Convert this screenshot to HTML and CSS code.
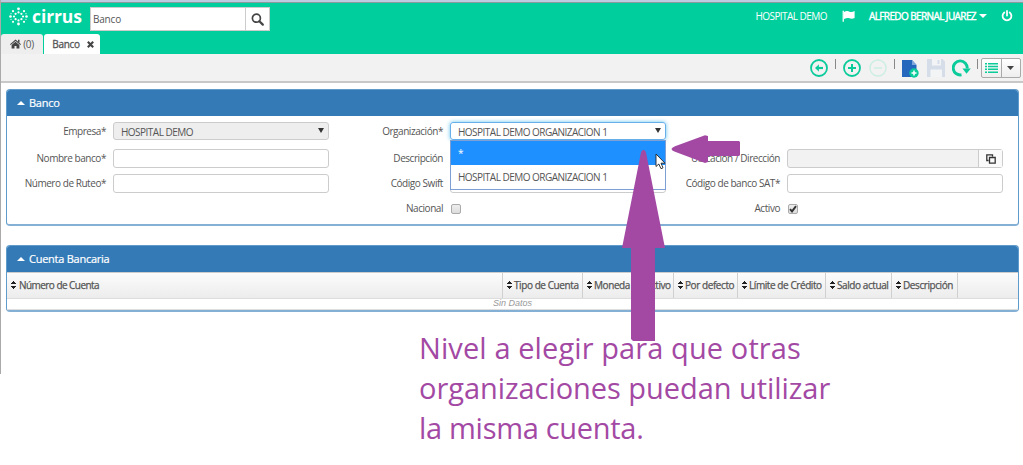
FILE: index.html
```html
<!DOCTYPE html>
<html lang="es">
<head>
  <meta charset="UTF-8" />
  <title>Cirrus - Banco</title>
  <link rel="stylesheet" href="styles.css">
</head>
<body>

<div class="app">
  <header>
    <div class="topbar">
      <div class="logo">
        <svg width="19" height="19" viewBox="0 0 19 19" fill="#fff">
          <circle cx="9.5" cy="1.8" r="1.4"/><circle cx="9.5" cy="5.4" r="1.1"/>
          <circle cx="9.5" cy="17" r="1.4"/><circle cx="9.5" cy="13.4" r="1.1"/>
          <circle cx="1.5" cy="9.5" r="1.3"/><circle cx="5" cy="9.5" r="1.1"/>
          <circle cx="17.5" cy="9.5" r="1.3"/><circle cx="14" cy="9.5" r="1.1"/>
          <circle cx="4" cy="4.2" r="1.1"/><circle cx="6.6" cy="6.8" r="1.1"/>
          <circle cx="15" cy="4.2" r="1.1"/><circle cx="12.4" cy="6.8" r="1.1"/>
          <circle cx="4" cy="14.8" r="1.1"/><circle cx="6.6" cy="12.2" r="1.1"/>
          <circle cx="15" cy="14.8" r="1.1"/><circle cx="12.4" cy="12.2" r="1.1"/>
          <circle cx="2" cy="6.7" r=".6"/><circle cx="2" cy="12.3" r=".6"/>
          <circle cx="17" cy="6.7" r=".6"/><circle cx="17" cy="12.3" r=".6"/>
        </svg>
        <span>cirrus</span>
      </div>
      <div class="search">
        <div class="search-text">Banco</div>
        <div class="search-btn">
          <svg width="13" height="13" viewBox="0 0 13 13" fill="none" stroke="#444">
            <circle cx="5.4" cy="5.2" r="4" stroke-width="1.7"/>
            <path d="M8.4 8.2L11.8 11.6" stroke-width="2.2" stroke-linecap="round"/>
          </svg>
        </div>
      </div>
      <div class="user">
        <span class="company">HOSPITAL DEMO</span>
        <svg class="flag" width="13" height="12" viewBox="0 0 13 12" fill="#fff">
          <path d="M.6 .8h1.3v11H.6z"/>
          <path d="M2 2C4.5.6 6 1 7.5 1.7S10.8 2 12.600 1.100V8C10.800 9 9 9 7.500 8.300S4.500 7.800 2 9z"/>
        </svg>
        <span class="name">ALFREDO BERNAL JUAREZ</span>
        <svg class="caret" width="8" height="4" viewBox="0 0 8 4"><path d="M0 0h8L4 4z" fill="#fff"/></svg>
        <svg width="12" height="12" viewBox="0 0 12 12" fill="none" stroke="#fff" stroke-width="1.8" stroke-linecap="round">
          <path d="M3.300 2.500A4.400 4.400 0 1 0 8.700 2.500M6 1V5.500"/>
        </svg>
      </div>
    </div>
    <div class="tabs">
      <div class="tab home">
        <svg width="11" height="10" viewBox="0 0 11 10" fill="#444">
          <path d="M5.500 .5L11 5.200L10.300 6L5.500 2L.7 6L0 5.200zM8 .8h1.500v3L8 2.500z"/>
          <path d="M5.500 2.800L9.400 6V9.600H6.500V6.900H4.500V9.600H1.600V6z"/>
        </svg>
        <span>(0)</span>
      </div>
      <div class="tab active">
        <span>Banco</span>
        <svg width="7" height="7" viewBox="0 0 7 7" stroke="#444" stroke-width="2.100"><path d="M.8 .8L6.200 6.200M6.200 .8L.8 6.200"/></svg>
      </div>
    </div>
  </header>

  <div class="toolbar">
    <svg class="t-back" width="18" height="18" viewBox="0 0 18 18" fill="none" stroke="#0bcb9b" stroke-width="1.800">
      <circle cx="9" cy="9" r="8"/>
      <path d="M5.800 9H13" stroke-width="2.200"/><path d="M8.900 5.300L5.200 9L8.900 12.700z" fill="#0bcb9b" stroke="none"/>
    </svg>
    <i class="sep"></i>
    <svg class="t-add" width="18" height="18" viewBox="0 0 18 18" fill="none" stroke="#0bcb9b" stroke-width="1.800">
      <circle cx="9" cy="9" r="8"/><path d="M9 5V13M5 9H13" stroke-width="2"/>
    </svg>
    <svg class="t-minus" width="18" height="18" viewBox="0 0 18 18" fill="none" stroke="#cdeee3" stroke-width="1.500">
      <circle cx="9" cy="9" r="8"/><path d="M5 9H13"/>
    </svg>
    <i class="sep"></i>
    <svg class="t-new" width="17" height="19" viewBox="0 0 17 19">
      <path d="M0 1H10L14.500 6V18H0z" fill="#2467bd"/><path d="M10 1V6H14.500z" fill="#7fa7dc"/>
      <circle cx="12" cy="14" r="4.700" fill="#0bcb9b"/><path d="M12 11.500V16.500M9.500 14H14.500" stroke="#fff" stroke-width="1.500"/>
    </svg>
    <svg class="t-save" width="18" height="18" viewBox="0 0 18 18">
      <path d="M0 0H15.500L18 2.500V18H0z" fill="#d5dde8"/><path d="M5 0H14V6.500H5zM3.500 10.500H15V18H3.500z" fill="#f3f4f6"/><path d="M10.500 1H12.500V5H10.500z" fill="#d5dde8"/>
    </svg>
    <svg class="t-refresh" width="19" height="18" viewBox="0 0 19 18">
      <path d="M9.500 15.800A7 7 0 1 1 15.200 9.500" fill="none" stroke="#0bcb9b" stroke-width="2.900"/><path d="M10.500 9.500H18.800L14.500 14.700z" fill="#0bcb9b"/>
    </svg>
    <i class="sep"></i>
    <div class="view-btn">
      <span class="view-list">
        <svg width="13" height="10" viewBox="0 0 13 10" fill="#0bcb9b"><path d="M0 0h2v1.500H0zM3 0h10v1.500H3zM0 2.800h2v1.500H0zM3 2.800h10v1.500H3zM0 5.600h2v1.500H0zM3 5.600h10v1.500H3zM0 8.400h2V9.900H0zM3 8.400h10V9.900H3z"/></svg>
      </span>
      <span class="view-caret"><svg width="7" height="4" viewBox="0 0 7 4"><path d="M0 0h7L3.500 4z" fill="#444"/></svg></span>
    </div>
  </div>

  <main>
    <section class="panel">
      <h2><i class="up"></i>Banco</h2>
      <div class="form">
        <label>Empresa*</label>
        <div class="field select disabled">HOSPITAL DEMO</div>
        <label>Organización*</label>
        <div class="field select focus">HOSPITAL DEMO ORGANIZACION 1
          <ul class="options">
            <li class="selected">*</li>
            <li>HOSPITAL DEMO ORGANIZACION 1</li>
          </ul>
        </div>
        <span></span><span></span>

        <label>Nombre banco*</label>
        <div class="field"></div>
        <label>Descripción</label>
        <div class="field"></div>
        <label>Ubicación / Dirección</label>
        <div class="field lookup">
          <span class="lookup-btn">
            <svg width="10" height="10" viewBox="0 0 10 10" fill="none" stroke="#333" stroke-width="1.300"><path d="M3.500 3.500H9.200V9.200H3.500zM2.500 6.500H.8V.8H6.500V2.500"/></svg>
          </span>
        </div>

        <label>Número de Ruteo*</label>
        <div class="field"></div>
        <label>Código Swift</label>
        <div class="field"></div>
        <label>Código de banco SAT*</label>
        <div class="field"></div>

        <span></span><span></span>
        <label>Nacional</label>
        <div class="check"></div>
        <label>Activo</label>
        <div class="check">
          <svg width="8" height="8" viewBox="0 0 8 8"><path d="M1 4.200L3 6.400L7 1.200" fill="none" stroke="#333" stroke-width="1.900"/></svg>
        </div>
      </div>
    </section>

    <section class="panel">
      <h2><i class="up"></i>Cuenta Bancaria</h2>
      <div class="grid-head">
        <div><i class="sort"></i>Número de Cuenta</div>
        <div><i class="sort"></i>Tipo de Cuenta</div>
        <div><i class="sort"></i>Moneda</div>
        <div><i class="sort"></i>Activo</div>
        <div><i class="sort"></i>Por defecto</div>
        <div><i class="sort"></i>Límite de Crédito</div>
        <div><i class="sort"></i>Saldo actual</div>
        <div><i class="sort"></i>Descripción</div>
        <div></div>
      </div>
      <div class="empty">Sin Datos</div>
    </section>
  </main>
</div>

<p class="note">
  <span class="l1">Nivel a elegir para que otras</span>
  <span class="l2">organizaciones puedan utilizar</span>
  <span class="l3">la misma cuenta.</span>
</p>

<!-- cursor and arrows over the page -->
<svg class="overlay" width="1023" height="465" viewBox="0 0 1023 465">
  <path d="M656 154V166.500L658.800 164L661 168.700L663 167.800L661 163.200H665z" fill="#fff" stroke="#222" stroke-width=".9"/>
  <g fill="#a349a4">
    <path d="M643.500 150Q645.800 150 646.500 155L665 248H655V341H633L631 339V248H622L640.500 155Q641.200 150 643.500 150z"/>
    <path d="M671.500 149Q671.500 147.600 675 146.200L705 135.200L708 136V141H739L740 142V155L739 156H708V162L705 163L675 151.800Q671.500 150.500 671.500 149z"/>
  </g>
</svg>

</body>
</html>
```
FILE: styles.css
```css
* {
  box-sizing: border-box;
}

body {
  margin: 0;
  font-family: "Open Sans", sans-serif;
  font-size: 10px;
  letter-spacing: -0.45px;
  color: #555;
  background-color: #fff;
}

svg {
  display: block;
  flex: none;
}

.app {
  height: 374px;
  border-left: 1px solid #aaa;
}

header {
  height: 54px;
  border-top: 2px solid #bccbe0;
  background-color: #00cf9d;
  box-shadow: inset 0 1px #8a9b9e;
  display: flex;
  flex-direction: column;
  justify-content: space-between;
}

.topbar {
  display: flex;
  align-items: flex-start;
  padding: 5px 10px 0 8px;
}

.logo {
  display: flex;
  width: 81px;
  gap: 4px;
  color: #fff;
}

.logo span {
  font-size: 17.5px;
  font-weight: 700;
  line-height: 18px;
  letter-spacing: -0.1px;
}

.search {
  display: flex;
  width: 180px;
  height: 24px;
  background-color: #fff;
  border: 1px solid #ccc;
}

.search-text {
  flex: 1;
  padding-left: 2px;
  line-height: 23px;
  letter-spacing: -0.2px;
}

.search-btn {
  width: 24px;
  border-left: 1px solid #ccc;
  display: flex;
  align-items: center;
  justify-content: center;
}

.user {
  display: flex;
  align-items: center;
  margin: 2px 0 0 auto;
  color: #fff;
  height: 14px;
}

.company {
  letter-spacing: -0.55px;
}

.flag {
  margin: 0 14px 0 15px;
}

.name {
  -webkit-text-stroke: 0.4px;
  letter-spacing: -0.6px;
}

.caret {
  margin: 0 14px 0 3px;
}

.tabs {
  display: flex;
  gap: 1px;
}

.tab {
  height: 20px;
  display: flex;
  align-items: center;
  justify-content: center;
  border-radius: 3px 3px 0 0;
}

.home {
  width: 42px;
  gap: 2px;
  background-color: #eee;
}

.active {
  width: 56px;
  gap: 7px;
  padding-left: 2px;
  background-color: #fff;
  -webkit-text-stroke: 0.3px;
  letter-spacing: -0.3px;
}

.toolbar {
  height: 29px;
  background-color: #f2f2f2;
  border-bottom: 2px solid #c8c8c8;
  display: flex;
  align-items: center;
  justify-content: flex-end;
  padding: 1px 2px 0 0;
}

.sep {
  width: 1px;
  height: 10px;
  margin-bottom: 8px;
  background-color: #888;
}

.t-back { margin-right: 7px; }
.t-add { margin: 0 8px 0 7px; }
.t-minus { margin-right: 7px; }
.t-new { margin: 0 8px 0 7px; }
.t-save { margin-right: 7px; }
.t-refresh { margin-right: 6px; }

.view-btn {
  display: flex;
  width: 40px;
  height: 20px;
  margin-left: 3px;
  border: 1px solid #aaa;
  border-radius: 2px;
  background: linear-gradient(#fff, #eee);
}

.view-btn span {
  display: flex;
  align-items: center;
  justify-content: center;
  flex: 1;
}

.view-caret {
  border-left: 1px solid #aaa;
}

main {
  padding: 6px 4px 0 5px;
}

.panel {
  border: 1px solid #5f9bcb;
  border-bottom: 2px solid #84b0d5;
  border-radius: 4px;
  margin-bottom: 19px;
}

.panel h2 {
  height: 26px;
  margin: 0;
  padding: 0 0 1px 10px;
  display: flex;
  align-items: center;
  gap: 4px;
  font-size: 11px;
  letter-spacing: -0.25px;
  font-weight: 400;
  -webkit-text-stroke: 0.2px;
  color: #fff;
  background-color: #337ab7;
  border-radius: 3px 3px 0 0;
}

.up {
  border: 4px solid transparent;
  border-top: 0;
  border-bottom: 4px solid #fff;
}

.form {
  display: grid;
  grid-template-columns: 106px 216px 121px 216px 121px 216px;
  grid-template-rows: 19px 19px 19px 19px;
  row-gap: 6px;
  height: 108px;
  padding-top: 6px;
}

.form label {
  padding-right: 7px;
  text-align: right;
  line-height: 18px;
}

.form > :nth-child(-n+6) {
  height: 18px;
}

.form > :nth-child(n+7) {
  position: relative;
  top: 2px;
}

.field {
  position: relative;
  border: 1px solid #ccc;
  border-radius: 3px;
  line-height: 19px;
  padding-left: 7px;
  letter-spacing: -0.52px;
}

.select::after {
  content: "";
  position: absolute;
  right: 4px;
  top: 5px;
  border: 3px solid transparent;
  border-top: 5px solid #333;
  border-bottom: 0;
}

.disabled {
  background-color: #eee;
}

.focus {
  border-color: #66afe9;
  box-shadow: 0 0 4px #66c4ee;
}

.options {
  position: absolute;
  z-index: 2;
  left: -1px;
  right: -1px;
  top: 17px;
  margin: 0;
  padding: 0;
  list-style: none;
  background-color: #fff;
  border: 1px solid #7d9fd3;
}

.options li {
  height: 24px;
  line-height: 24px;
  padding-left: 7px;
}

.options .selected {
  background-color: #1e90ff;
  color: #fff;
}

.lookup {
  background-color: #f2f2f2;
  display: flex;
  justify-content: flex-end;
}

.lookup-btn {
  width: 24px;
  border-left: 1px solid #ccc;
  background-color: #fafafa;
  display: flex;
  align-items: center;
  justify-content: center;
}

.check {
  width: 10px;
  height: 10px;
  margin: 5px 0 0 1px;
  border: 1px solid #aaa;
  border-radius: 2px;
  background: linear-gradient(#eee, #ddd);
}

.grid-head {
  display: grid;
  grid-template-columns: 496px 80px 55px 36px 64px 88px 66px 66px 1fr;
  height: 27px;
  border-top: 1px solid #ccc;
  border-bottom: 1px solid #ddd;
  background: linear-gradient(#fcfcfc, #ececec);
  -webkit-text-stroke: 0.25px;
  letter-spacing: -0.42px;
}

.grid-head div {
  display: flex;
  align-items: center;
  gap: 2px;
  padding: 0 0 1px 4px;
  border-right: 1px solid #d0d0d0;
  white-space: nowrap;
}

.grid-head div:first-child {
  gap: 3px;
  letter-spacing: -0.55px;
}

.grid-head div:nth-child(4) {
  padding-left: 0;
}

.grid-head div:last-child {
  border-right: 0;
}

.sort {
  flex: none;
  width: 5px;
  height: 8px;
  background:
    conic-gradient(from 135deg at 50% 0, #222 90deg, transparent 0) top / 5px 3px no-repeat,
    conic-gradient(from -45deg at 50% 100%, #222 90deg, transparent 0) bottom / 5px 3px no-repeat;
}

.empty {
  height: 11px;
  border-bottom: 1px solid #ddd;
  text-align: center;
  font: italic 9px/9px "Liberation Sans", sans-serif;
  letter-spacing: 0;
  color: #999;
}

.note {
  margin: -46px 0 0 419px;
  font-size: 29px;
  line-height: 40px;
  letter-spacing: -0.05px;
  color: #a349a4;
}

.note span {
  display: block;
  white-space: nowrap;
}

.note .l1 {
  letter-spacing: 0.1px;
}

.note .l3 {
  letter-spacing: -0.3px;
}

.overlay {
  position: absolute;
  z-index: 5;
  top: 0;
  left: 0;
}
```
